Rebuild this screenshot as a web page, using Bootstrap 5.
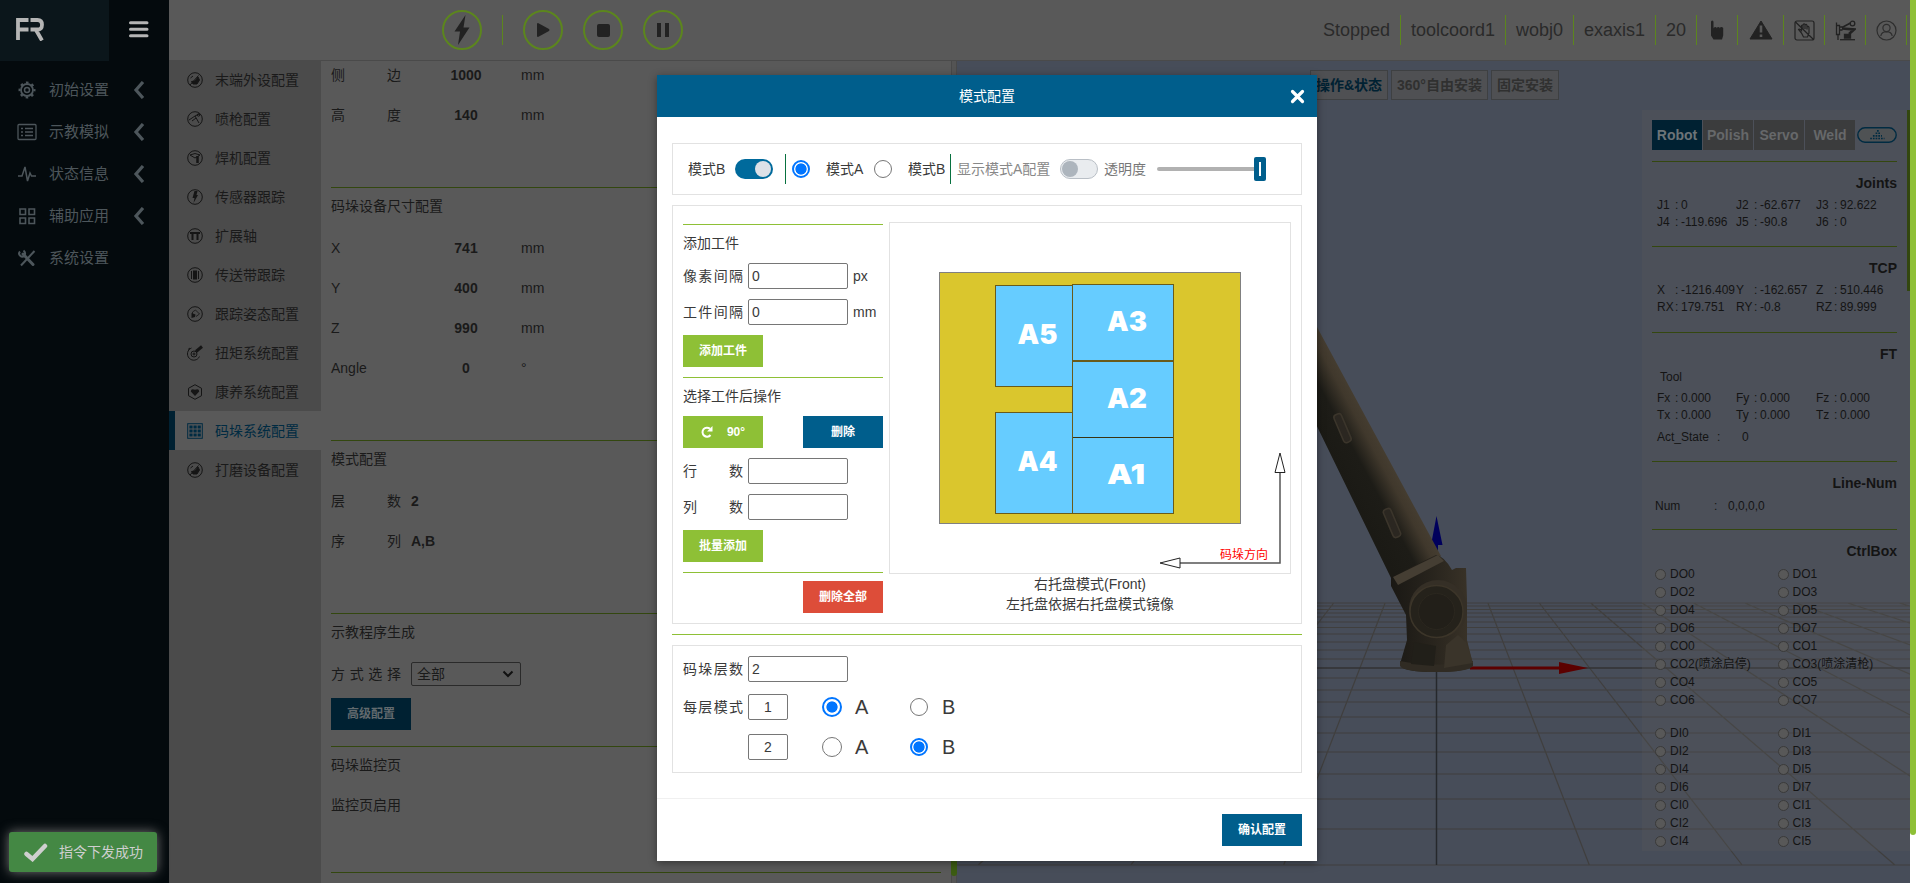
<!DOCTYPE html>
<html lang="zh-CN">
<head>
<meta charset="utf-8">
<title>码垛系统配置</title>
<meta name="viewport" content="width=device-width, initial-scale=1">
<link href="https://cdn.jsdelivr.net/npm/bootstrap@5.3.0/dist/css/bootstrap.min.css" rel="stylesheet">
<style>
html,body{height:100%;overflow:hidden}
body{font-family:"Liberation Sans","Noto Sans CJK SC",sans-serif;font-size:14px;line-height:20px;color:#3a3a3a;background:#595959}
svg{display:block;flex:none}
.app{width:1916px;height:883px;position:relative;overflow:hidden}
.j{text-align:justify;text-align-last:justify;display:inline-block}
/* left navigation */
.side{width:169px;background:#040a0d;color:#4d565b;font-size:15px}
.brand{width:109px;height:61px;background:#0b161b;padding:18px 0 0 16px}
.burger{width:60px;height:61px;padding:21px 0 0 20px}
.side-item{height:42px;padding-left:17px}
.side-item span{width:84px;padding-left:12px;box-sizing:content-box}
.side-list{padding-top:8px}
/* top bar */
.topbar{height:61px;background:#595959;border-bottom:1px solid #4a4a4a;font-size:18px;color:#2a2a2a}
.ring{width:40px;height:40px;border:2px solid #5c861d;border-radius:50%}
.sep{width:1px;height:30px;background:#5c861d;flex:none;margin:0 20px}
.cellx{height:30px;border-right:1px solid #5c861d}
/* second menu */
.submenu{width:152px;background:#4b4b4b;color:#1a1a1a;margin-top:-1px}
.sub-item{height:39px;padding-left:18px;border-left:0 solid #002132}
.sub-item span{margin-left:12px;padding-top:1px}
.sub-item.active{background:#595959;color:#002b42;border-left-width:6px;padding-left:12px}
/* settings page */
.conf{width:630px;padding:0 10px;color:#1a1a1a}
.rowx{height:40px}
.rowx .j{width:70px}
.rowx b{width:70px;margin-left:30px;text-align:center}
.rowx i{margin-left:20px;font-style:normal}
.sect{border-top:1px solid #33470f}
.sect h6{font-size:14px;font-weight:400;line-height:20px;margin:0;height:40px;padding-top:8px}
.selx{width:110px;height:24px;border:1px solid #2a2a2a;border-radius:2px;margin-left:10px;padding:0 6px 0 5px}
.btnx{--bs-btn-padding-x:0;--bs-btn-padding-y:0;--bs-btn-font-size:12px;--bs-btn-font-weight:700;--bs-btn-border-radius:0;--bs-btn-border-width:0;--bs-btn-color:#fff;width:80px;height:32px;line-height:32px}
.bg-dim{background:#002132;color:#626a6e}
.vbar{width:6px;background:#545454;border-left:1px solid #494949;border-right:1px solid #494949}
.vbar div{height:181px;background:#3c5c12;margin:634px -1px 0;border-radius:0 0 3px 3px}
/* 3D view */
.view3d{background:#474d59}
.tagbtn{height:30px;border:1px solid #3e4042;background:#4f5053;color:#303030;font-weight:700;line-height:29px;text-align:center}
.status{width:268px;height:741px;background:rgba(89,89,89,.28);top:49px;right:0;color:#141414;font-size:12px;padding:10px 13px 0 10px}
.status .tabx{width:50px;height:30px;line-height:30px;background:#3b3c3d;color:#66686a;font-size:14px;font-weight:700;text-align:center}
.status .tabx.on{background:#002132;color:#6c7478}
.blk{border-top:1px solid #34470f}
.blk h6{font-size:14px;font-weight:700;line-height:20px;text-align:right;margin:0;padding-top:11px;height:35px}
.g3{display:grid;grid-template-columns:79px 80px 1fr;line-height:17px;padding-left:5px}
.g3 span{white-space:nowrap;display:flex}
.g3 em{font-style:normal;width:18px}
.g3 u{text-decoration:none;width:6px}
.io{display:grid;grid-template-columns:122.5px 1fr;line-height:18px;padding-left:3px}
.io div{display:flex;align-items:center;white-space:nowrap}
.io div::before{content:"";width:11px;height:11px;border-radius:50%;background:#585858;border:1px solid #3a3a3a;margin-right:4px}
.sbar{width:6px;background:#fff}
.sbar div{height:835px;background:#8ec036;border-radius:0 0 3px 3px}
/* dialog */
.dlg{position:absolute;left:657px;top:75px;width:660px;height:786px;background:#fff;box-shadow:0 2px 8px rgba(0,0,0,.4)}
.dlg-head{height:42px;background:#005e8c;color:#fff;font-weight:400;position:relative;line-height:42px;text-align:center}
.dlg-head svg{position:absolute;right:12px;top:14px}
.box{border:1px solid #e2e2e2}
.tgl{width:38px;height:20px;border-radius:10px;padding:2px}
.tgl div{width:16px;height:16px;border-radius:50%}
.rd{appearance:none;width:18px;height:18px;border:1.4px solid #767676;border-radius:50%;margin:0;flex:none}
.rd:checked{border:2px solid #0075ff;background:radial-gradient(circle,#0075ff 0 5.2px,#fff 6px)}
.rd.lg20{width:20px;height:20px}
.fs20{font-size:20px;margin-left:13px;width:15px}
.vl{width:1px;height:30px;background:#08713f;flex:none}
.gl{height:1px;background:#8ec036}
.inp{width:100px;height:26px;border:1px solid #767676;border-radius:2px;padding:1px 3px;color:#3a3a3a;font-size:14px;outline:0;background:#fff}
.lab{width:60px;margin-right:5px}
.green{background:#8ec036}.blue{background:#005e8c}.red{background:#dd4d39}
.rng{width:109px;height:24px;position:relative}
.rng::before{content:"";position:absolute;left:0;right:5px;top:10px;height:4px;background:#b1b1b1;border-radius:2px}
.rng div{position:absolute;right:0;top:0;width:12px;height:24px;border-radius:2px;background:#005e8c;padding:5px}
.rng div::before{content:"";display:block;width:2px;height:14px;background:#fff}
.toastx{position:absolute;left:9px;top:832px;width:148px;height:40px;background:#448844;border-radius:3px;color:#cfcfcf;box-shadow:0 0 12px #777;padding-left:15px}
</style>
</head>
<body>
<div class="app d-flex">

  <nav class="side d-flex flex-column flex-shrink-0">
    <div class="d-flex">
      <div class="brand">
        <svg width="28" height="23" viewBox="0 0 28 23" fill="none" stroke="#b5b5b5" stroke-width="3.800"><path d="M2 22V2H12.500M2 11.500H12.500M14.500 2H21.500Q26 2 26 6.800T21.500 11.500H14.500M20 12L26 22.500"/></svg>
      </div>
      <div class="burger"><svg width="20" height="17" stroke="#b5b5b5" stroke-width="3" stroke-linecap="round"><path d="M1.500 1.800H18M1.500 8.300H18M1.500 14.800H18"/></svg></div>
    </div>
    <div class="side-list">
      <div class="side-item d-flex align-items-center"><svg width="20" height="20" fill="none" stroke="#4d565b"><circle cx="10" cy="10" r="6" stroke-width="1.800"/><circle cx="10" cy="10" r="2.500" stroke-width="1.500"/><circle cx="10" cy="10" r="7.500" stroke-dasharray="2.600 3.290" stroke-dashoffset="1.300" stroke-width="2"/></svg><span>初始设置</span><svg width="12" height="18" fill="none" stroke="#4d565b" stroke-width="3.200"><path d="M10 1L3 9L10 17"/></svg></div>
      <div class="side-item d-flex align-items-center"><svg width="20" height="20" fill="none" stroke="#4d565b" stroke-width="1.300"><rect x="1" y="2.500" width="18" height="15" rx="1"/><path d="M4 6.500h2M8 6.500h8M4 10h2M8 10h8M4 13.500h2M8 13.500h8"/></svg><span>示教模拟</span><svg width="12" height="18" fill="none" stroke="#4d565b" stroke-width="3.200"><path d="M10 1L3 9L10 17"/></svg></div>
      <div class="side-item d-flex align-items-center"><svg width="20" height="20" fill="none" stroke="#4d565b" stroke-width="1.500"><path d="M1 12H5L8 3L10.500 17L13 9L14.500 12H19"/></svg><span>状态信息</span><svg width="12" height="18" fill="none" stroke="#4d565b" stroke-width="3.200"><path d="M10 1L3 9L10 17"/></svg></div>
      <div class="side-item d-flex align-items-center"><svg width="20" height="20" fill="none" stroke="#4d565b" stroke-width="1.600"><path d="M3 3h5.500v5.500H3zM12 3h5.500v5.500H12zM3 12h5.500v5.500H3zM12 12h5.500v5.500H12z"/></svg><span>辅助应用</span><svg width="12" height="18" fill="none" stroke="#4d565b" stroke-width="3.200"><path d="M10 1L3 9L10 17"/></svg></div>
      <div class="side-item d-flex align-items-center"><svg width="20" height="20" fill="none" stroke="#4d565b"><path stroke-width="3" stroke-linecap="round" d="M6 6L16 16.500"/><path stroke-width="2" d="M17.500 3L4 17.500"/><path stroke-width="2" d="M3 3.500A3 3 0 0 0 7.500 7.500A4 4 0 0 0 6.500 2.500"/></svg><span>系统设置</span></div>
    </div>
  </nav>

  <div class="d-flex flex-column flex-grow-1">
    <header class="topbar d-flex align-items-center flex-shrink-0">
      <div class="d-flex align-items-center" style="padding-left:273px">
        <div class="ring d-flex align-items-center justify-content-center"><svg width="18" height="30" fill="#222"><path d="M12.500 0L1.500 16.500H7L5 30L16.500 12.500H10.500z"/></svg></div>
        <div class="sep"></div>
        <div class="ring d-flex align-items-center justify-content-center"><svg width="14" height="14" fill="#222"><path d="M2 0Q1 0 1 1V13Q1 14 2 14L13 8Q14 7 13 6z"/></svg></div>
        <div class="ring d-flex align-items-center justify-content-center" style="margin-left:20px"><svg width="13" height="13" fill="#222"><rect width="13" height="13" rx="2"/></svg></div>
        <div class="ring d-flex align-items-center justify-content-center" style="margin-left:20px"><svg width="12" height="14" fill="#222"><path d="M0 0h4v14H0zM8 0h4v14H8z"/></svg></div>
      </div>
      <div class="d-flex align-items-center ms-auto text-nowrap" style="padding-right:3px;line-height:30px">
        <div class="cellx" style="width:78px">Stopped</div>
        <div class="cellx" style="width:105px;padding-left:10px">toolcoord1</div>
        <div class="cellx" style="width:68px;padding-left:10px">wobj0</div>
        <div class="cellx" style="width:82px;padding-left:10px">exaxis1</div>
        <div class="cellx" style="width:41px;padding-left:10px">20</div>
        <div class="cellx d-flex align-items-center justify-content-center" style="width:41px"><svg width="14" height="20" fill="#222"><path d="M1 2Q1 .5 2.200 .5Q3.500 .5 3.500 2V8.500L4 7.500Q5.500 6.500 6.500 7.500V8.500L7 7.500Q8.500 6.500 9.500 7.500V8.500L10 7.500Q12 6.500 13.200 8V15.500L12 19.500H3.500L1 15.500z"/></svg></div>
        <div class="cellx d-flex align-items-center justify-content-center" style="width:46px"><svg width="24" height="20"><path fill="#222" stroke="#222" stroke-linejoin="round" d="M12 1L23 19H1z"/><path stroke="#595959" stroke-width="2.600" d="M12 5.500V12.500M12 14.500V17"/></svg></div>
        <div class="cellx d-flex align-items-center justify-content-center" style="width:41px"><svg width="21" height="21" fill="none" stroke="#222" stroke-width="1.200"><rect x="1" y="1" width="19" height="19" rx="2"/><path d="M1.500 2L19.500 19.500M7.500 13L4.500 9.500Q5 8.500 6.500 9.500L7.500 10.500V5.500Q8.300 4.500 9 5.500V9M9 5Q10 3 11 4.500V9M11 5Q12.300 3.500 13 5.500V9.500M13 7Q14.500 5.500 15 7.500V13L13.500 17H9.500L7.500 13"/></svg></div>
        <div class="cellx d-flex align-items-center justify-content-center" style="width:41px"><svg width="21" height="21" fill="none" stroke="#222" stroke-width="1.300"><path d="M1.500 5.500H4.500V14.500H1.500zM3 14.500V20M1.500 2.500V5.500M5 7H7.500M5 10H7.500"/><path stroke-width="1.600" d="M7 7.500L15.500 3"/><circle cx="17.500" cy="3.500" r="2.300"/><path stroke-width="2.600" d="M7 8.500L19 9.500L14 14"/><path fill="#222" d="M9.500 14.500H15.500V18H9.500z"/><path d="M5 19.700H20"/></svg></div>
        <div class="cellx d-flex align-items-center justify-content-center" style="width:41px"><svg width="21" height="21" fill="none" stroke="#2e2e2e" stroke-width="1.200"><circle cx="10.500" cy="10.500" r="9.500"/><circle cx="10.500" cy="8" r="3.600"/><path d="M4.800 16Q5.500 11.800 10.500 11.600Q15.500 11.800 16.200 16"/></svg></div>
      </div>
    </header>

    <div class="d-flex flex-grow-1">
      <div class="submenu flex-shrink-0" id="sub"></div>

      <main class="conf flex-shrink-0">
        <div class="rowx d-flex align-items-center" style="height:28px;margin-bottom:6px"><span class="j">侧边</span><b>1000</b><i>mm</i></div>
        <div class="rowx d-flex align-items-center" style="margin-bottom:52px"><span class="j">高度</span><b>140</b><i>mm</i></div>
        <section class="sect" style="height:253px"><h6>码垛设备尺寸配置</h6>
          <div class="rowx d-flex align-items-center"><span style="width:70px">X</span><b>741</b><i>mm</i></div>
          <div class="rowx d-flex align-items-center"><span style="width:70px">Y</span><b>400</b><i>mm</i></div>
          <div class="rowx d-flex align-items-center"><span style="width:70px">Z</span><b>990</b><i>mm</i></div>
          <div class="rowx d-flex align-items-center"><span style="width:70px">Angle</span><b>0</b><i>°</i></div>
        </section>
        <section class="sect" style="height:173px"><h6>模式配置</h6>
          <div class="rowx d-flex align-items-center"><span class="j">层数</span><strong style="margin-left:10px">2</strong></div>
          <div class="rowx d-flex align-items-center"><span class="j">序列</span><strong style="margin-left:10px">A,B</strong></div>
        </section>
        <section class="sect" style="height:133px"><h6>示教程序生成</h6>
          <div class="rowx d-flex align-items-center"><span class="j">方式选择</span>
            <div class="selx d-flex align-items-center justify-content-between">全部<svg width="12" height="8" fill="none" stroke="#111" stroke-width="2"><path d="M1.500 1.500L6 6L10.500 1.500"/></svg></div></div>
          <button class="btn btnx bg-dim d-block" style="margin-top:4px">高级配置</button>
        </section>
        <section class="sect" style="height:126px"><h6>码垛监控页</h6><div class="rowx d-flex align-items-center" style="height:36px">监控页启用</div></section>
        <section class="sect"></section>
      </main>
      <div class="vbar flex-shrink-0"><div></div></div>

      <div class="view3d flex-grow-1 position-relative overflow-hidden">
        <svg class="position-absolute top-0 start-0" width="953" height="822" viewBox="957 61 953 822">
          <defs>
            <linearGradient id="arm" gradientUnits="userSpaceOnUse" x1="1342" y1="478" x2="1394" y2="450"><stop offset="0" stop-color="#1b1a15"/><stop offset=".4" stop-color="#1d1c17"/><stop offset=".7" stop-color="#40382c"/><stop offset="1" stop-color="#4a4235"/></linearGradient>
            <linearGradient id="bod" x1="0" x2="1"><stop offset="0" stop-color="#1a1814"/><stop offset=".5" stop-color="#28241d"/><stop offset="1" stop-color="#3b3429"/></linearGradient>
          </defs>
          <g id="grid" fill="none" stroke="#403f3e" stroke-width="1.200"></g>
          <path d="M957 668H1910" stroke="#323233" stroke-width="1.500"/>
          <path d="M1436.500 668V865" stroke="#26282c" stroke-width="1.500"/>
          <path d="M1436.500 516L1431 545H1435V556H1438V545H1442.500z" fill="#00005c"/>
          <path d="M1470 666.500H1559V662L1588 668L1559 674V669.500H1470z" fill="#5c0000"/>
          <path d="M1310 312L1317 327L1441 556L1392 580L1310 412z" fill="url(#arm)"/>
          <path d="M1391 577L1436 555Q1444 556 1452 570L1456 568H1466L1467 600V640L1473 664Q1471 672 1436 672T1400 664L1407 640L1406 615L1391 586z" fill="url(#bod)"/>
          <path d="M1393 577L1438 555L1444 561L1398 585z" fill="#453e33"/>
          <path d="M1400 661Q1434 668 1473 661V666Q1468 672 1436 672T1400 666z" fill="#302b23"/>
          <path d="M1446 645L1458 635L1466 642L1473 663L1444 668z" fill="#3a342a"/>
          <path d="M1414 642L1436 646L1434 666L1411 664z" fill="#211f19"/>
          <ellipse cx="1438" cy="609" rx="29" ry="29" fill="#352f26"/>
          <ellipse cx="1436.500" cy="611.500" rx="26.500" ry="26" fill="#25221b" stroke="#3c3529" stroke-width="1.500"/>
          <ellipse cx="1436.500" cy="611.500" rx="18" ry="18" fill="#221f19" stroke="#2b271f"/>
          <g fill="#2b2721" stroke="#3b352b" stroke-width="1.600"><rect x="1338.500" y="413" width="8" height="30" rx="3" transform="rotate(-23 1343 428)"/><rect x="1388" y="508" width="8" height="30" rx="3" transform="rotate(-23 1392 523)"/></g>
        </svg>
        <div class="position-relative d-flex" style="padding:9px 0 0 353px;gap:3px">
          <div class="tagbtn" style="width:78px;color:#002132">操作&amp;状态</div>
          <div class="tagbtn" style="width:97px">360°自由安装</div>
          <div class="tagbtn" style="width:68px">固定安装</div>
        </div>
        <aside class="status position-absolute">
          <div class="d-flex align-items-center" style="gap:1px;margin-bottom:11px">
            <div class="tabx on">Robot</div><div class="tabx">Polish</div><div class="tabx">Servo</div><div class="tabx">Weld</div>
            <svg class="ms-auto" width="40" height="16" fill="none" stroke="#002b42"><rect x=".8" y=".8" width="38.400" height="14.400" rx="7.200" stroke-width="1.400" fill="#4f5254"/><path stroke-width="1.600" stroke-dasharray="1.700 1" d="M13.200 11.500H27.500M15.900 8.900H25M18.600 6.300H23M20 3.900H21.700"/></svg>
          </div>
          <div class="blk" style="height:85px"><h6>Joints</h6>
            <div class="g3"><span><em>J1</em><u>:</u>0</span><span><em>J2</em><u>:</u>-62.677</span><span><em>J3</em><u>:</u>92.622</span><span><em>J4</em><u>:</u>-119.696</span><span><em>J5</em><u>:</u>-90.8</span><span><em>J6</em><u>:</u>0</span></div></div>
          <div class="blk" style="height:86px"><h6>TCP</h6>
            <div class="g3"><span><em>X</em><u>:</u>-1216.409</span><span><em>Y</em><u>:</u>-162.657</span><span><em>Z</em><u>:</u>510.446</span><span><em>RX</em><u>:</u>179.751</span><span><em>RY</em><u>:</u>-0.8</span><span><em>RZ</em><u>:</u>89.999</span></div></div>
          <div class="blk" style="height:129px"><h6>FT</h6>
            <div style="padding-left:8px;line-height:18px;margin-bottom:4px">Tool</div>
            <div class="g3"><span><em>Fx</em><u>:</u>0.000</span><span><em>Fy</em><u>:</u>0.000</span><span><em>Fz</em><u>:</u>0.000</span><span><em>Tx</em><u>:</u>0.000</span><span><em>Ty</em><u>:</u>0.000</span><span><em>Tz</em><u>:</u>0.000</span></div>
            <div class="d-flex" style="padding:3px 0 0 5px"><span style="width:60px">Act_State</span><span style="width:25px">:</span>0</div></div>
          <div class="blk" style="height:68px"><h6>Line-Num</h6>
            <div class="d-flex" style="padding-left:3px;line-height:18px"><span style="width:59px">Num</span><span style="width:14px">:</span>0,0,0,0</div></div>
          <div class="blk"><h6>CtrlBox</h6>
            <div class="io" id="io1"></div><div class="io" id="io2" style="margin-top:15px"></div></div>
        </aside>
        <div class="position-absolute" style="right:0;top:49px;width:3px;height:181px;background:#33470f"></div>
      </div>
    </div>
  </div>
  <div class="sbar flex-shrink-0"><div></div></div>

  <div class="dlg d-flex flex-column">
    <div class="dlg-head">模式配置<svg width="15" height="15" stroke="#fff" stroke-width="3.200" stroke-linecap="round"><path d="M2.500 2.500L12.500 12.500M12.500 2.500L2.500 12.500"/></svg></div>
    <div class="flex-grow-1" style="padding:26px 15px 0">
      <div class="box d-flex align-items-center text-nowrap" style="height:52px;padding-left:15px">
        <span style="width:47px">模式B</span>
        <div class="tgl d-flex justify-content-end" style="background:#006a9c"><div style="background:#dde1e7"></div></div>
        <div class="vl" style="margin:0 6px 0 12px"></div>
        <input type="radio" name="m" class="rd" checked><span style="margin-left:16px;width:48px">模式A</span>
        <input type="radio" name="m" class="rd"><span style="margin-left:16px;width:42px">模式B</span>
        <div class="vl" style="margin-right:6px"></div>
        <span style="width:103px;color:#888">显示模式A配置</span>
        <div class="tgl" style="background:#e9ecef;border:1px solid #b9bfc6;padding:1px"><div style="background:#adb5bd"></div></div>
        <span style="margin-left:6px;width:53px;color:#777">透明度</span>
        <div class="rng"><div></div></div>
      </div>

      <div class="box d-flex" style="height:419px;margin-top:10px;padding:16px 10px 0">
        <div class="d-flex flex-column flex-shrink-0" style="width:200px;margin-right:6px;padding-top:2px">
          <div class="gl"></div>
          <div style="height:38px;padding-top:8px">添加工件</div>
          <div class="d-flex align-items-center" style="margin-bottom:10px"><span class="j lab">像素间隔</span><input class="inp" value="0"><span style="margin-left:5px">px</span></div>
          <div class="d-flex align-items-center" style="margin-bottom:10px"><span class="j lab">工件间隔</span><input class="inp" value="0"><span style="margin-left:5px">mm</span></div>
          <button class="btn btnx green">添加工件</button>
          <div class="gl" style="margin-top:10px"></div>
          <div style="height:38px;padding-top:8px">选择工件后操作</div>
          <div class="d-flex justify-content-between" style="margin-bottom:10px">
            <button class="btn btnx green d-flex align-items-center justify-content-center"><svg width="12" height="12" fill="none" stroke="#fff" stroke-width="2"><path d="M9.500 9A4.500 4.500 0 1 1 9 2.800"/><path fill="#fff" stroke="none" d="M11.500 0V5.500H6z"/></svg><span style="margin-left:14px">90°</span></button>
            <button class="btn btnx blue">删除</button></div>
          <div class="d-flex align-items-center" style="margin-bottom:10px"><span class="j lab">行数</span><input class="inp"></div>
          <div class="d-flex align-items-center" style="margin-bottom:10px"><span class="j lab">列数</span><input class="inp"></div>
          <button class="btn btnx green">批量添加</button>
          <div class="gl" style="margin:10px 0 8px"></div>
          <button class="btn btnx red align-self-end">删除全部</button>
        </div>
        <div class="text-center">
          <svg class="box" width="402" height="352" viewBox="890 223 400 350">
            <rect x="939.500" y="272.500" width="301" height="251" fill="#dac62d" stroke="#808080"/>
            <g fill="#66ccff" stroke="#695b1b"><rect x="995.500" y="285.500" width="77" height="101"/><rect x="995.500" y="412.500" width="77" height="101"/><rect x="1072.500" y="284.500" width="101" height="76"/><rect x="1072.500" y="361.500" width="101" height="76"/><rect x="1072.500" y="437.500" width="101" height="76"/></g>
            <path d="M1073 437.500H1173" stroke="#3a3413"/>
            <g font-family="Inter,'Liberation Sans',sans-serif" font-weight="900" font-size="27" fill="#fff" text-anchor="middle"><text x="1037.500" y="343.500" textLength="40" lengthAdjust="spacingAndGlyphs">A5</text><text x="1037.500" y="470.500" textLength="40" lengthAdjust="spacingAndGlyphs">A4</text><text x="1127" y="330.500" textLength="40" lengthAdjust="spacingAndGlyphs">A3</text><text x="1127" y="407.500" textLength="40" lengthAdjust="spacingAndGlyphs">A2</text><text x="1126" y="483.500" textLength="38" lengthAdjust="spacingAndGlyphs">A1</text></g>
            <path d="M1280 473V563H1180" fill="none" stroke="#555" stroke-width="1.500"/>
            <path d="M1280 453L1275 472.500H1285zM1160 563L1180 558V568z" fill="#fff" stroke="#222"/>
            <text x="1244" y="558.500" font-size="12" fill="red" text-anchor="middle">码垛方向</text>
          </svg>
          <div>右托盘模式(Front)<br>左托盘依据右托盘模式镜像</div>
        </div>
      </div>

      <div class="gl" style="margin:10px 0"></div>

      <div class="box" style="height:128px;padding:10px">
        <div class="d-flex align-items-center" style="margin-bottom:12px"><span class="j lab">码垛层数</span><input class="inp" value="2"></div>
        <div class="d-flex align-items-center" style="margin-bottom:14px"><span class="j lab">每层模式</span><input class="inp text-center" style="width:40px" value="1">
          <input type="radio" name="a" class="rd lg20" style="margin-left:34px" checked><span class="fs20">A</span><input type="radio" name="a" class="rd" style="margin-left:40px"><span class="fs20" style="margin-left:14px">B</span></div>
        <div class="d-flex align-items-center"><span class="lab"></span><input class="inp text-center" style="width:40px" value="2">
          <input type="radio" name="b" class="rd lg20" style="margin-left:34px"><span class="fs20">A</span><input type="radio" name="b" class="rd" style="margin-left:40px" checked><span class="fs20" style="margin-left:14px">B</span></div>
      </div>
    </div>
    <div class="text-end" style="height:63px;border-top:1px solid #f0f0f0;padding:15px"><button class="btn btnx blue d-block ms-auto">确认配置</button></div>
  </div>

  <div class="toastx d-flex align-items-center">
    <svg width="24" height="19" fill="none" stroke="#cfcfcf" stroke-width="4.500" stroke-linecap="round"><path d="M2.500 11L8.500 16L21 3"/></svg>
    <span style="margin-left:11px">指令下发成功</span>
  </div>
</div>
<script src="https://cdn.jsdelivr.net/npm/bootstrap@5.3.0/dist/js/bootstrap.bundle.min.js"></script>
<script>
// ground grid in perspective
let d='';
for(const y of [603,606,609.5,613,617,622,627.5,634,642,650,659,678,690,702,717,733,752,774,799,829,865]) d+=`M957 ${y}H1910`;
for(let k=-10;k<=10;k++) if(k) d+=`M${1436.5+51.4*k} 603L${1436.5+152.8*k} 865`;
document.getElementById('grid').innerHTML=`<path d="${d}"/>`;
// controller box signals
const fill=(id,a)=>document.getElementById(id).innerHTML=a.map(t=>`<div>${t}</div>`).join('');
fill('io1',['DO0','DO1','DO2','DO3','DO4','DO5','DO6','DO7','CO0','CO1','CO2(喷涂启停)','CO3(喷涂清枪)','CO4','CO5','CO6','CO7']);
fill('io2',['DI0','DI1','DI2','DI3','DI4','DI5','DI6','DI7','CI0','CI1','CI2','CI3','CI4','CI5']);
// second-level menu
const ring='<circle cx="8" cy="8" r="7.3"/>';
const grind=ring+'<path fill="#151515" d="M11 5L12.500 8L10 12H6L4.500 9.500L8 9z"/><path d="M3 13L11.500 3.500M3.500 6L6 4"/>';
const items=[['末端外设配置',grind],
['喷枪配置',ring+'<path d="M2 9L8 5L12 3M8 5L12 12M5 10L9 7"/><circle cx="11.5" cy="4" r="1.2"/>'],
['焊机配置',ring+'<path d="M3 5Q8 2 13 5L8 8z"/><path stroke-width="2.5" d="M10.5 6V13"/>'],
['传感器跟踪',ring+'<path fill="#151515" stroke="none" d="M7.500 2H10.500L9.500 6H11L6.500 14L7.500 9H5.500z"/>'],
['扩展轴',ring+'<path stroke-width="2" d="M3 5H13M5.500 5V12M10.500 5V12"/>'],
['传送带跟踪',ring+'<path stroke-width="4" d="M8 3.500V12.500"/><path d="M4.500 4V12M11.500 4V12"/>'],
['跟踪姿态配置',ring+'<path stroke-width=".8" d="M5.500 8V6L8.500 4L12.500 8L9 10.500"/><path fill="#151515" stroke="none" d="M4.500 7L8.500 8.500L8 11L4.500 12z"/>'],
['扭矩系统配置','<path d="M4.500 3A6.300 6.300 0 1 0 12.500 11.500M1 4.500L3 3"/><circle cx="7" cy="9" r="3"/><circle cx="7" cy="9" r="1"/><path stroke-width="3" d="M9 6.500L15 1.500"/>'],
['康养系统配置','<path d="M8 .7L14.500 4.300V11.700L8 15.300L1.500 11.700V4.300z"/><path fill="#151515" stroke="none" d="M8 12L3.800 7.500Q4 4 8 5.800Q12 4 12.200 7.500z"/>'],
['码垛系统配置','<rect x=".7" y=".7" width="14.600" height="14.600"/><path stroke-width="3" stroke-dasharray="3.200 .9" d="M2.400 3.900H13.800M2.400 8H13.800M2.400 12.100H13.800"/>'],
['打磨设备配置',grind]];
document.getElementById('sub').innerHTML=items.map(([t,p],i)=>`<div class="sub-item d-flex align-items-center${i==9?' active':''}"><svg width="16" height="16" fill="none" stroke="${i==9?'#002b42':'#151515'}" stroke-width="1">${p}</svg><span>${t}</span></div>`).join('');
</script>
</body>
</html>
